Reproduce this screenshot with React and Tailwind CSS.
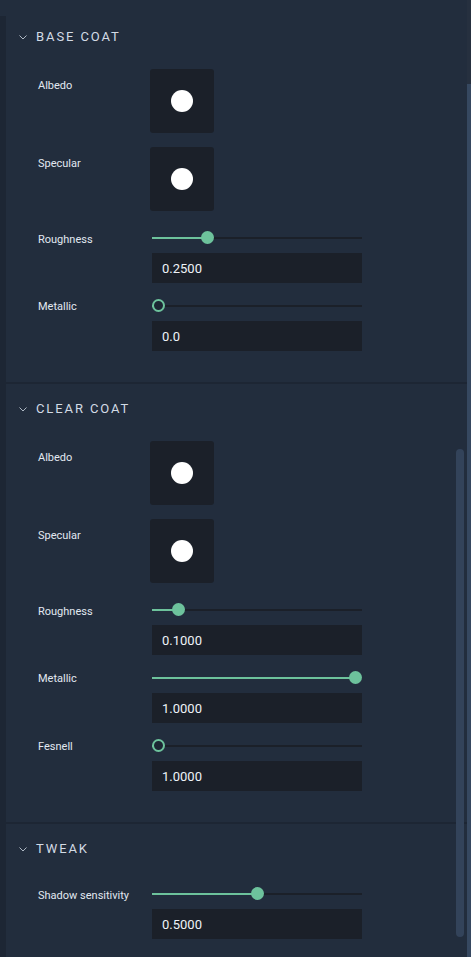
import React from "react";

function Chevron() {
  return (
    <svg width="8" height="5" viewBox="0 0 8 5" className="block">
      <path d="M0.5 0.5 L4 4 L7.5 0.5" fill="none" stroke="#aeb8c4" strokeWidth="1" />
    </svg>
  );
}

function Header({ title }) {
  return (
    <div className="h-[48px] flex items-center pl-[13px] pt-[2px]">
      <Chevron />
      <span className="ml-[9px] text-[13px] leading-[16px] tracking-[1.9px] text-[#d3dbe5] font-normal">
        {title}
      </span>
    </div>
  );
}

function SwatchRow({ label, className = "" }) {
  return (
    <div className={"flex " + className}>
      <div className="w-[112px] pt-[9px] text-[11px] leading-[16px] text-[#e1e8f1]">{label}</div>
      <div className="w-[64px] h-[64px] rounded-[3px] bg-[#1b2029] flex items-center justify-center">
        <div className="w-[22px] h-[22px] rounded-full bg-white" />
      </div>
    </div>
  );
}

function Slider({ value }) {
  const pos = 197 * value;
  return (
    <div className="relative h-[22px] w-[210px] ml-[2px]">
      <div className="absolute left-0 right-0 top-[10px] h-[2px] bg-[#1b2029]" />
      <div className="absolute left-0 top-[10px] h-[2px] bg-[#6dc29c]" style={{ width: 6.5 + pos }} />
      {value === 0 ? (
        <div
          className="absolute top-[4px] w-[13px] h-[13px] rounded-full border-2 border-[#6dc29c] bg-[#1c2633]"
          style={{ left: pos }}
        />
      ) : (
        <div className="absolute top-[4px] w-[13px] h-[13px] rounded-full bg-[#6dc29c]" style={{ left: pos }} />
      )}
    </div>
  );
}

function SliderRow({ label, value, text, className = "", labelPad = "pt-[5px]" }) {
  return (
    <div className={"flex " + className}>
      <div className={"w-[112px] text-[11px] leading-[16px] text-[#e1e8f1] " + labelPad}>{label}</div>
      <div className="flex flex-col">
        <Slider value={value} />
        <div className="mt-[4px] ml-[2px] w-[210px] h-[30px] bg-[#1b2029] flex items-center pl-[10px] pt-[1px] text-[13px] text-[#eef3f8]">
          {text}
        </div>
      </div>
    </div>
  );
}

export default function App() {
  return (
    <div
      className="w-[471px] h-[957px] flex overflow-hidden bg-[#222d3d]"
      style={{ fontFamily: "Roboto, 'Noto Sans', sans-serif" }}
    >
      <div className="w-[6px] flex flex-col">
        <div className="h-[16px] bg-[#222d3d]" />
        <div className="flex-1 bg-[#1d2634]" />
      </div>
      <div className="relative flex-1 flex flex-col pt-[12px]">
        <section>
          <Header title="BASE COAT" />
          <div className="pl-[32px] pt-[9px] pb-[31px] flex flex-col">
            <SwatchRow label="Albedo" />
            <SwatchRow label="Specular" className="mt-[14px]" />
            <SliderRow label="Roughness" value={0.25} text="0.2500" className="mt-[16px]" />
            <SliderRow label="Metallic" value={0} text="0.0" className="mt-[12px]" labelPad="pt-[4px]" />
          </div>
        </section>
        <section className="border-t-2 border-[#1d2634]">
          <Header title="CLEAR COAT" />
          <div className="pl-[32px] pt-[9px] pb-[31px] flex flex-col">
            <SwatchRow label="Albedo" />
            <SwatchRow label="Specular" className="mt-[14px]" />
            <SliderRow label="Roughness" value={0.1} text="0.1000" className="mt-[16px]" />
            <SliderRow label="Metallic" value={1} text="1.0000" className="mt-[12px]" labelPad="pt-[4px]" />
            <SliderRow label="Fesnell" value={0} text="1.0000" className="mt-[12px]" labelPad="pt-[4px]" />
          </div>
        </section>
        <section className="border-t-2 border-[#1d2634] flex-1">
          <Header title="TWEAK" />
          <div className="pl-[32px] pt-[11px] flex flex-col">
            <SliderRow label="Shadow sensitivity" value={0.5} text="0.5000" />
          </div>
        </section>
        <div className="absolute right-[3px] top-[449px] w-[8px] h-[488px] rounded-full bg-[#33435a]" />
      </div>
      <div className="w-[4px] flex flex-col">
        <div className="h-[84px] bg-[#26303f]" />
        <div className="flex-1 bg-[#364860]" />
      </div>
    </div>
  );
}
